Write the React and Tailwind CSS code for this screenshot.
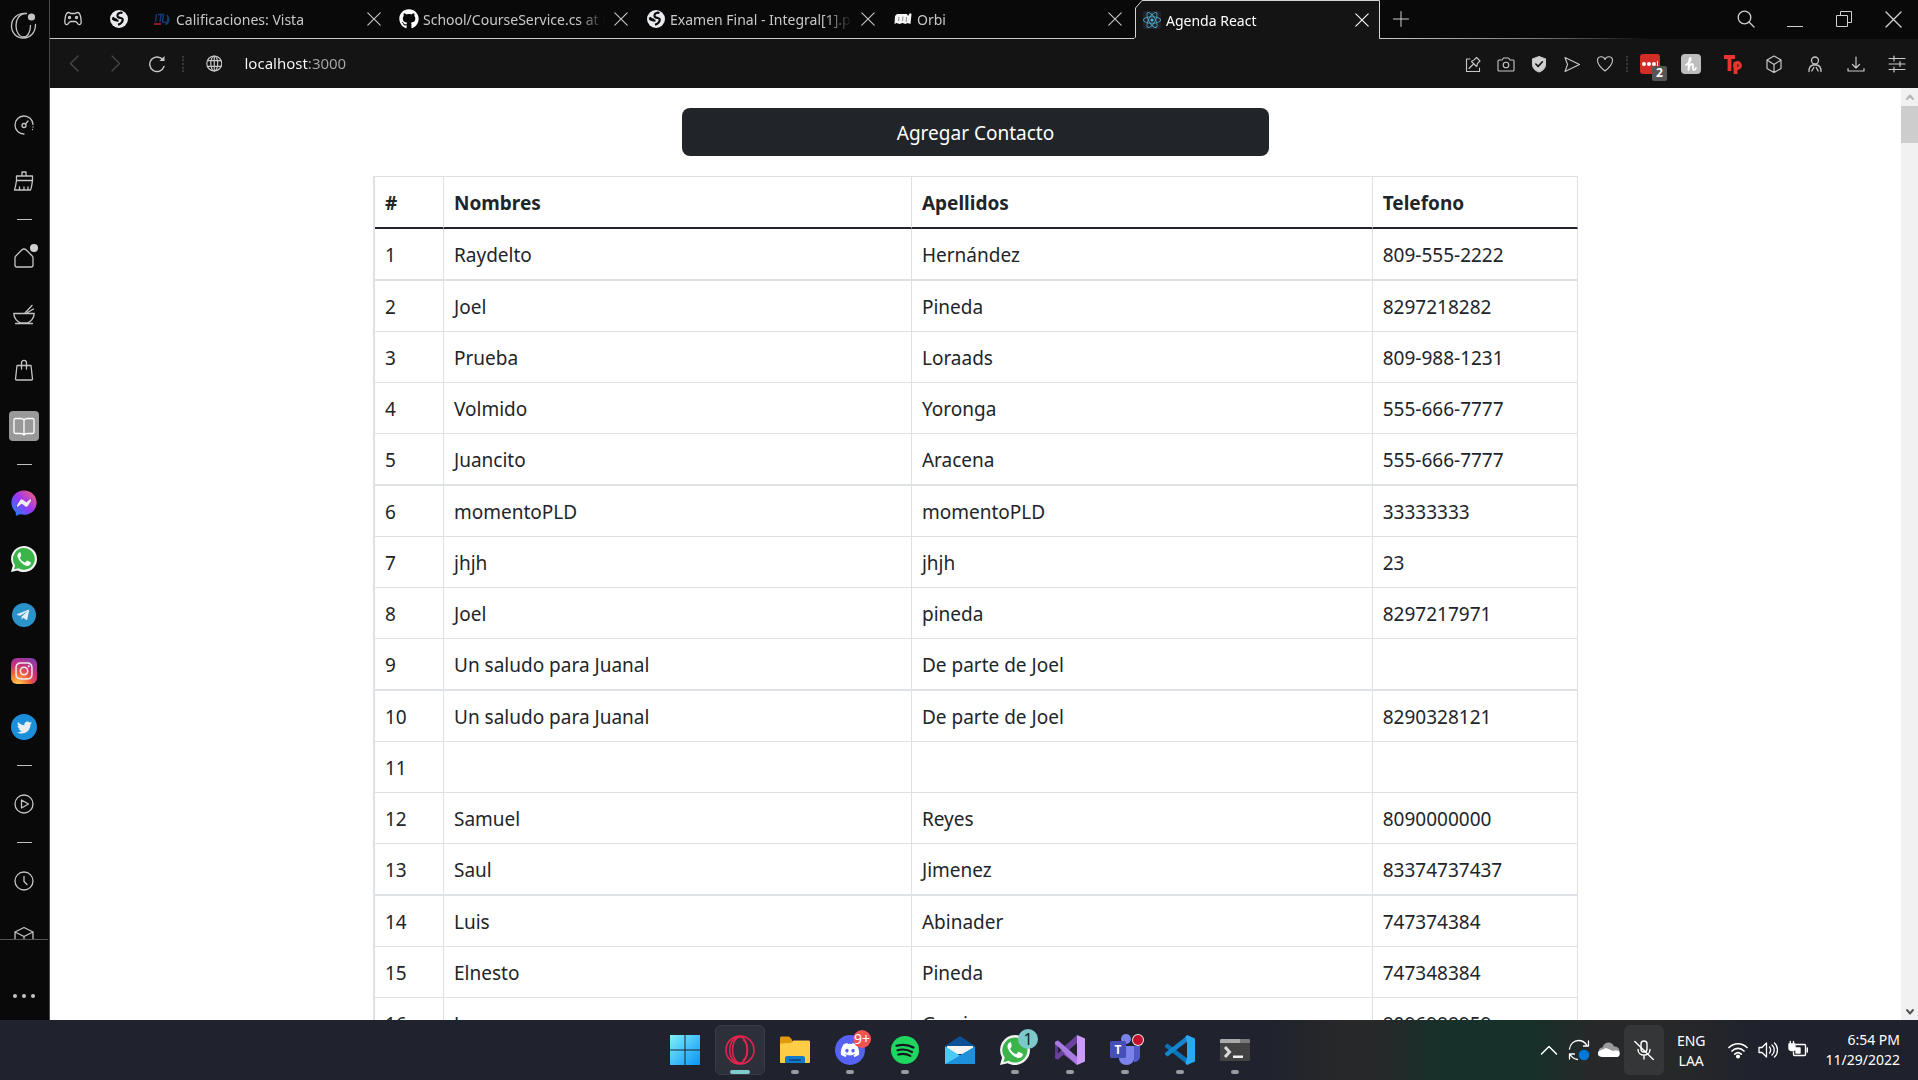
import { useId } from "react";
import {
  FaDiscord,
  FaFacebookMessenger,
  FaGithub,
  FaInstagram,
  FaReact,
  FaTelegramPlane,
  FaTwitter,
  FaWhatsapp,
} from "react-icons/fa";

const contacts = [
  ["Raydelto", "Hernández", "809-555-2222"],
  ["Joel", "Pineda", "8297218282"],
  ["Prueba", "Loraads", "809-988-1231"],
  ["Volmido", "Yoronga", "555-666-7777"],
  ["Juancito", "Aracena", "555-666-7777"],
  ["momentoPLD", "momentoPLD", "33333333"],
  ["jhjh", "jhjh", "23"],
  ["Joel", "pineda", "8297217971"],
  ["Un saludo para Juanal", "De parte de Joel", ""],
  ["Un saludo para Juanal", "De parte de Joel", "8290328121"],
  ["", "", ""],
  ["Samuel", "Reyes", "8090000000"],
  ["Saul", "Jimenez", "83374737437"],
  ["Luis", "Abinader", "747374384"],
  ["Elnesto", "Pineda", "747348384"],
  ["Jose", "Garcia", "8096988959"],
];

/* ---------- line icon helper ---------- */

function Line({ children, className = "size-6", box = 24, width = 1.3 }) {
  return (
    <svg
      viewBox={`0 0 ${box} ${box}`}
      className={className}
      fill="none"
      stroke="currentColor"
      strokeWidth={width}
      strokeLinecap="round"
      strokeLinejoin="round"
      aria-hidden="true"
    >
      {children}
    </svg>
  );
}

function CloseIcon({ className = "size-3.5" }) {
  return (
    <Line className={className} box={14} width={1.1}>
      <path d="M.8.8l12.4 12.4M13.2.8L.8 13.2" />
    </Line>
  );
}

function GlobeFilled() {
  return (
    <svg viewBox="0 0 18 18" className="size-[18px]" aria-hidden="true">
      <circle cx="9" cy="9" r="9" fill="#e8eaed" />
      <path
        d="M12.500 3C10.500 2.200 8 3 7.500 5c-.4 2 1 2.800 3.200 3 1.800.2 2.300 1.300 1.900 2.700-.6 2-2.300 3.200-4.600 4M7 9.800C4.800 9.500 3.500 8.700 2.500 7.300"
        stroke="#0a0a0a"
        strokeWidth="2.200"
        fill="none"
      />
      <path d="M2.500 8.500c1.500 1.800 3.500 2 6 2.200" stroke="#0a0a0a" strokeWidth="2" fill="none" />
    </svg>
  );
}

/* ---------- browser tabs ---------- */

const tabs = [
  {
    title: "Calificaciones: Vista",
    icon: (
      <svg viewBox="0 0 16 16" className="size-4" fill="none" aria-hidden="true">
        <path d="M2.500 3L1.500 11M4 3.500h6M7 3.500L6 11M9.500 3L8.500 11h3M11 13c3-1 3.500-6 2-9 2 2 3 7-1 9.500" stroke="#143a78" strokeWidth="1.500" />
        <path d="M0 12h7v2H0z" fill="#8d1c24" />
      </svg>
    ),
  },
  { title: "School/CourseService.cs at master", icon: <FaGithub className="size-5 text-white" /> },
  { title: "Examen Final - Integral[1].pdf", icon: <GlobeFilled /> },
  {
    title: "Orbi",
    icon: (
      <svg viewBox="0 0 18 14" className="w-[18px]" aria-hidden="true">
        <path d="M1 4l2-2h10l1 2 2-3 1.500 1-1 10-3-1-2 1-3-1-3 1-3-1-2 1z" fill="#f4f4f4" />
        <path d="M5 5l-.5 4M9 4.500L8.500 9M12.500 5l-.3 5" stroke="#777" strokeWidth=".8" />
      </svg>
    ),
  },
  {
    title: "Agenda React",
    active: true,
    icon: (
      <span className="flex size-[18px] items-center justify-center rounded-xs bg-[#20232a]">
        <FaReact className="size-[18px] text-[#4fb3d3]" />
      </span>
    ),
  },
];

function Tab({ title, icon, active }) {
  return (
    <div
      role="tab"
      aria-selected={!!active}
      className={
        active
          ? "relative flex w-[247px] min-w-0 items-center pl-2 pr-3 text-white"
          : "flex w-[247px] min-w-0 items-center border-b border-[#c8cacb] pl-1.5 pr-3 text-[#c8c8c8]"
      }
    >
      {active && (
        <svg viewBox="0 0 247 39" className="absolute inset-0 h-full w-full" aria-hidden="true">
          <path d="M0 38.500L1.500 37V8L8 .5H245.500V38.500V39H0z" fill="#141414" />
          <path d="M0 38.500L1.500 37V8L8 .5H245.500V38.500H247" fill="none" stroke="#d4d6d6" />
        </svg>
      )}
      <span className="relative flex w-5 shrink-0 justify-center">{icon}</span>
      <span className="relative ml-1 flex-1 overflow-hidden whitespace-nowrap pt-0.5 [mask-image:linear-gradient(90deg,#000_155px,transparent_182px)]">
        {title}
      </span>
      <button type="button" aria-label={`Cerrar ${title}`} className="relative shrink-0 pl-2">
        <CloseIcon />
      </button>
    </div>
  );
}

function TabStrip() {
  return (
    <div className="flex h-[39px] shrink-0 text-sm text-[#d0d0d0]">
      <div className="flex w-24 shrink-0 items-center gap-7 border-b border-[#c8cacb] pl-3.5">
        <button type="button" aria-label="GX Corner">
          <Line className="size-[18px]" box={18}>
            <path d="M4.500 2.500c1.500 0 1.500 1 2.500 1h4c1 0 1-1 2.500-1 2.500 0 3.500 5 3.700 9 .1 2.500-1.200 3.500-2.400 3-1.500-.6-2-3-3.500-3H6.700c-1.500 0-2 2.400-3.500 3-1.200.5-2.500-.5-2.400-3 .2-4 1.200-9 3.700-9z" />
            <circle cx="5.500" cy="7.500" r="1" />
            <circle cx="12.500" cy="7.500" r="1" />
          </Line>
        </button>
        <button type="button" aria-label="Pestaña fijada">
          <GlobeFilled />
        </button>
      </div>
      <div role="tablist" className="flex min-w-0">
        {tabs.map((tab) => (
          <Tab key={tab.title} {...tab} />
        ))}
      </div>
      <div className="flex flex-1 items-center border-b border-transparent pl-3 pr-4 [border-image:linear-gradient(90deg,#c8cacb_0%,#777_30%,transparent_50%)_1]">
        <button type="button" aria-label="Nueva pestaña">
          <Line className="size-4" box={16} width={1}>
            <path d="M8 .5v15M.5 8h15" />
          </Line>
        </button>
        <div className="ml-auto flex items-center gap-8">
          <button type="button" aria-label="Buscar pestañas">
            <Line className="size-[18px]" box={18}>
              <circle cx="7.500" cy="7.500" r="6.300" />
              <path d="M12 12l5 5" />
            </Line>
          </button>
          <button type="button" aria-label="Minimizar">
            <Line className="size-4" box={16} width={1.2}>
              <path d="M.5 15.500h15" />
            </Line>
          </button>
          <button type="button" aria-label="Restaurar">
            <svg viewBox="0 0 18 18" className="size-[18px]" fill="none" stroke="currentColor" aria-hidden="true">
              <path d="M1.500 5.500h11v11h-11zM5.500 5.500v-4h11v11h-4" />
            </svg>
          </button>
          <button type="button" aria-label="Cerrar">
            <CloseIcon className="size-[17px]" />
          </button>
        </div>
      </div>
    </div>
  );
}

/* ---------- address bar ---------- */

const pageActions = [
  ["Instantánea fijada", <path d="M6 4H2.500v12.500h13V13M5 13.500l4-4M7.500 6.500l5 5c1-1 1-2 .8-2.800L16 6l-3.500-3.500-2.700 2.700c-1 0-1.800.3-2.300 1.300z" />],
  [
    "Captura",
    <g>
      <path d="M2 5h3l1.500-2h5L13 5h3c.6 0 1 .4 1 1v9c0 .6-.4 1-1 1H2c-.6 0-1-.4-1-1V6c0-.6.4-1 1-1z" />
      <circle cx="9" cy="10" r="2.800" />
    </g>,
  ],
  [
    "Bloqueador",
    <g>
      <path d="M9 1.500L15.500 4v5.500c0 3.500-3 6-6.500 7.500-3.500-1.500-6.500-4-6.500-7.500V4z" fill="#d0d0d0" />
      <path d="M5.800 9l2.400 2.400 4.200-4.600" stroke="#141414" strokeWidth="1.600" />
    </g>,
  ],
  ["Enviar", <path d="M2 2.500L16.500 9.500 2 16.500l2.500-7z" />],
  ["Favorito", <path d="M9 16C4.500 12.500 1.500 9 1.500 5.500 1.500 1 7.500.5 9 4.500c1.500-4 7.500-3.500 7.500 1C16.500 9 13.500 12.500 9 16z" />],
];

function Dots() {
  return <span className="h-4 w-0 border-l-2 border-dotted border-[#3a3a3a]" />;
}

function AddressBar() {
  return (
    <div className="flex h-[49px] shrink-0 items-center bg-[#141414] pl-4 pr-3 text-[#c8c8c8]">
      <div className="flex items-center gap-6">
        <button type="button" aria-label="Atrás" className="text-[#4a4a4a]">
          <Line className="size-[17px]" box={17} width={1.2}>
            <path d="M12 1L4.500 8.500 12 16" />
          </Line>
        </button>
        <button type="button" aria-label="Adelante" className="text-[#4a4a4a]">
          <Line className="size-[17px]" box={17} width={1.2}>
            <path d="M5 1l7.500 7.500L5 16" />
          </Line>
        </button>
        <button type="button" aria-label="Recargar">
          <Line className="size-[18px]" box={18} width={1.4}>
            <path d="M16 11.500A7.300 7.300 0 1 1 15 5" />
            <path d="M16.500 1v5h-5z" fill="currentColor" stroke="none" />
          </Line>
        </button>
      </div>
      <span className="ml-4 flex">
        <Dots />
      </span>
      <form className="ml-[22px] flex flex-1 items-center gap-[22px]" onSubmit={(e) => e.preventDefault()}>
        <Line className="size-[17px]" box={17} width={1.2}>
          <circle cx="8.500" cy="8.500" r="7.700" />
          <ellipse cx="8.500" cy="8.500" rx="3.600" ry="7.700" />
          <path d="M1.500 5.500h14M1.500 11.500h14M8.500 1v15" />
        </Line>
        <input
          aria-label="Dirección"
          defaultValue="localhost:3000"
          className="w-full bg-[linear-gradient(90deg,#fff_65px,#a8a8a8_65px)] bg-clip-text text-[15px] text-transparent outline-none"
        />
      </form>
      <div className="flex items-center gap-[15px]">
        {pageActions.map(([label, shape]) => (
          <button type="button" key={label} aria-label={label}>
            <Line className="size-[18px]" box={18} width={1.1}>
              {shape}
            </Line>
          </button>
        ))}
      </div>
      <span className="ml-3 flex">
        <Dots />
      </span>
      <div className="ml-3 flex items-center gap-[23px]">
        <button type="button" aria-label="LastPass" className="relative mr-[-2px] flex h-[20px] w-[20px] items-center justify-center gap-[1px] rounded-[3px] bg-[#d32d27]">
          <span className="size-[4px] rounded-full bg-white" />
          <span className="size-[4px] rounded-full bg-white" />
          <span className="size-[4px] rounded-full bg-white" />
          <span className="h-[6px] w-px bg-white" />
          <span className="absolute left-3 top-3 flex h-[15px] w-[15px] items-center justify-center rounded-xs bg-[#555] text-xs font-bold text-white">
            2
          </span>
        </button>
        <button type="button" aria-label="Honey" className="flex size-5 items-center justify-center rounded-sm bg-[#bdbdbd] text-white">
          <Line className="size-4" box={16} width={1.8}>
            <path d="M3 9c3-2 5-5 4.500-7C6.500 1.500 6 5 5.500 14c.5-4 2-6 3.500-6 2 0 0 5 1.500 6 .8.300 2-.7 2.500-2" />
          </Line>
        </button>
        <button type="button" aria-label="Teleparty" className="text-[#e8352f]">
          <svg viewBox="0 0 18 20" className="h-5 w-[18px]" fill="none" stroke="currentColor" strokeWidth="3.800" aria-hidden="true">
            <path d="M0 3h11M5.500 3v14M11.500 8v12" />
            <circle cx="13.500" cy="11.500" r="2.800" strokeWidth="3.200" />
          </svg>
        </button>
        <button type="button" aria-label="Extensiones">
          <Line className="size-[18px]" box={18} width={1.2}>
            <path d="M9 1l7 4v8.500L9 17.500 2 13.500V5zM2 5l7 4.500L16 5M9 9.500v8" />
          </Line>
        </button>
        <button type="button" aria-label="Perfil">
          <Line className="size-[18px]" box={18} width={1.3}>
            <circle cx="9" cy="5.500" r="3.500" />
            <path d="M3 16.500c0-4 1.500-6 4-6.500h4c2.500.5 4 2.500 4 6.500M5.800 16l2-3.500M12.200 16l-2-3.500" />
          </Line>
        </button>
        <button type="button" aria-label="Descargas">
          <Line className="size-[18px]" box={18} width={1.2}>
            <path d="M9 2v11M5.500 9.500L9 13l3.500-3.500M1 13.500v2.500h16v-2.500" />
          </Line>
        </button>
        <button type="button" aria-label="Configuración rápida">
          <Line className="size-[18px]" box={18} width={1.2}>
            <path d="M1 3.500h16M1 9h16M1 14.500h16M6 1v5M12 6.500v5M6 12v5" />
          </Line>
        </button>
      </div>
    </div>
  );
}

/* ---------- sidebar ---------- */

function Separator() {
  return (
    <div className="flex h-[47px] shrink-0 items-center">
      <span className="h-px w-[15px] bg-[#c0c0c0]" />
    </div>
  );
}

function SideButton({ label, children, className = "" }) {
  return (
    <button type="button" aria-label={label} className={`relative flex size-[30px] shrink-0 items-center justify-center ${className}`}>
      {children}
    </button>
  );
}

function Sidebar() {
  const gradient = useId();
  return (
    <aside className="flex w-[50px] shrink-0 flex-col border-r border-[#4a4a4a] bg-[#090909] pr-px text-[#c4c4c4]">
      <div className="flex h-[110px] shrink-0 justify-center pt-3">
        <button type="button" aria-label="Menú" className="size-7">
          <Line className="size-7" box={28} width={1.3}>
            <path d="M16.500 1.500C7 .5 1.500 7 1.500 14c0 6.500 5 12 11.500 12 7.500 0 12.500-5.500 12.500-13.500" />
            <path d="M15.500 1.500C9 2 6 7.500 6 13.500 6 19.500 9 25 13.500 25c4 0 7-4.500 7-11.500" />
            <circle cx="21.500" cy="5" r="3.600" fill="currentColor" stroke="none" />
          </Line>
        </button>
      </div>
      <div className="flex min-h-0 flex-1 flex-col items-center overflow-hidden border-b border-[#555]">
        <div className="flex flex-col items-center gap-[26px]">
          <SideButton label="GX Control">
            <Line className="size-5" box={20}>
              <path d="M10 19A9 9 0 1 1 19 9.500" />
              <circle cx="10" cy="10.500" r="2" />
              <path d="M11.500 9L14 6" />
              <path d="M19 12v0M18.500 14.500v0" />
            </Line>
          </SideButton>
          <SideButton label="GX Cleaner">
            <Line className="size-[22px]" box={22}>
              <path d="M9 6V2h4v4M3.500 6h16v4.500h-16zM3.500 10.500C3 14 2.500 17 1.500 20h16c1-2 1.500-6 2-9.500M6.500 20v-3M11 20v-3M15 20v-3" />
            </Line>
          </SideButton>
        </div>
        <Separator />
        <div className="flex flex-col items-center gap-[26px]">
          <SideButton label="Inicio">
            <Line className="size-[22px]" box={22}>
              <path d="M8.500 3.200L2.800 9c-.5.500-.8 1-.8 1.700V18c0 1.100.9 2 2 2h14c1.100 0 2-.9 2-2v-7.300c0-.7-.3-1.200-.8-1.700l-5.700-5.800c-1.500-1.500-3.500-1.500-5 0z" />
            </Line>
            <span className="absolute right-px top-px size-2 rounded-full bg-[#d0d0d0]" />
          </SideButton>
          <SideButton label="Cocina">
            <Line className="size-[22px]" box={22}>
              <path d="M.8 10.500h20.400c0 4.500-3.700 8.500-7 9.500H7.800c-3.300-1-7-5-7-9.500zM2.500 20.500h17M12 10l7-7.500M14.500 9.500l6-3.500" />
            </Line>
          </SideButton>
          <SideButton label="Compras">
            <Line className="size-[22px]" box={22}>
              <path d="M4 6.500h14l1.500 13.500c0 .6-.4 1-1 1h-15c-.6 0-1-.4-1-1zM8.500 10V4c0-3.500 5-3.500 5 0v6" />
            </Line>
          </SideButton>
          <SideButton label="Lectura" className="rounded-sm bg-[#999] text-white">
            <Line className="size-[22px]" box={22}>
              <path d="M11 5C10 3.500 9 3.500 7.500 3.500h-5c-.8 0-1.500.7-1.500 1.500v12c0 .8.700 1.500 1.500 1.500h5c1.500 0 2.500.3 3.500 1.500 1-1.200 2-1.500 3.500-1.500h5c.8 0 1.500-.7 1.500-1.500V5c0-.8-.7-1.500-1.500-1.500h-5C13 3.500 12 3.500 11 5zM11 5v15" />
            </Line>
          </SideButton>
        </div>
        <Separator />
        <div className="flex flex-col items-center gap-[26px]">
          <SideButton label="Messenger">
            <svg width="0" height="0" className="absolute" aria-hidden="true">
              <linearGradient id={gradient} x1="0" y1="1" x2="1" y2="0">
                <stop offset="0" stopColor="#0a8cff" />
                <stop offset=".5" stopColor="#9a36f5" />
                <stop offset="1" stopColor="#ff6468" />
              </linearGradient>
            </svg>
            <span className="absolute size-4 rounded-full bg-[#eee]" />
            <FaFacebookMessenger className="relative size-[26px]" style={{ fill: `url(#${gradient})` }} />
          </SideButton>
          <SideButton label="WhatsApp">
            <WhatsAppMark className="size-[26px]" />
          </SideButton>
          <SideButton label="Telegram">
            <span className="flex size-6 items-center justify-center rounded-full bg-[#2a93c9]">
              <FaTelegramPlane className="mr-0.5 size-3.5 text-[#e6eef4]" />
            </span>
          </SideButton>
          <SideButton label="Instagram">
            <span className="flex size-[26px] items-center justify-center rounded-md bg-[radial-gradient(circle_at_25%_105%,#fdc04f_8%,#f0603c_38%,#cc2c7c_62%,#6a45c0_100%)]">
              <FaInstagram className="size-5 text-[#f1e6ee]" />
            </span>
          </SideButton>
          <SideButton label="Twitter">
            <span className="flex size-[26px] items-center justify-center rounded-full bg-[#1c8fdc]">
              <FaTwitter className="size-[15px] text-[#e8eef2]" />
            </span>
          </SideButton>
        </div>
        <Separator />
        <SideButton label="Reproductor">
          <Line className="size-5" box={20}>
            <circle cx="10" cy="10" r="9" />
            <path d="M7.500 6l7 4-7 4z" />
          </Line>
        </SideButton>
        <Separator />
        <div className="flex flex-col items-center gap-[26px]">
          <SideButton label="Historial">
            <Line className="size-5" box={20}>
              <circle cx="10" cy="10" r="9" />
              <path d="M10 5.500v5l3 3" />
            </Line>
          </SideButton>
          <SideButton label="Extensiones">
            <Line className="size-[22px]" box={22}>
              <path d="M11 1.500L20 6v10.500L11 21l-9-4.500V6zM2 6l9 4.500L20 6M11 10.500V21" />
            </Line>
          </SideButton>
        </div>
      </div>
      <div className="flex h-20 shrink-0 items-center justify-center">
        <button type="button" aria-label="Configuración" className="mt-8 flex gap-[5px]">
          <span className="size-1 rounded-full bg-[#c4c4c4]" />
          <span className="size-1 rounded-full bg-[#c4c4c4]" />
          <span className="size-1 rounded-full bg-[#c4c4c4]" />
        </button>
      </div>
    </aside>
  );
}

function WhatsAppMark({ className }) {
  return (
    <span className={`relative flex items-center justify-center ${className}`}>
      <svg viewBox="0 0 32 32" className="absolute inset-0 size-full" aria-hidden="true">
        <path d="M16 0a16 16 0 0 1 0 32c-3 0-5.500-.8-7.800-2L0 32l2.200-8A16 16 0 0 1 16 0z" fill="#f4f4f4" />
        <path d="M16 2.600a13.400 13.400 0 1 1-7 24.900L3.700 29l1.400-5.100A13.400 13.400 0 0 1 16 2.600z" fill="#3bb54a" />
        <path
          d="M11 7.800c-.5 0-1 .2-1.500.8-1.500 1.700-2 3.600-1 6 2 4.600 5.500 8.100 10 9.700 2.500.8 5-.5 5.700-2.500.3-1 .3-1.600 0-1.900l-3.700-1.900c-.6-.2-.9-.1-1.300.4l-1.300 1.700c-.3.300-.6.400-1.100.2-3-1.300-4.500-3-5.800-5.200-.2-.4-.1-.8.200-1.100l1.100-1.400c.2-.4.2-.7.100-1.100L11.800 8.300c-.2-.4-.4-.5-.8-.5z"
          fill="#fff"
        />
      </svg>
    </span>
  );
}

/* ---------- page ---------- */

function ContactsPage() {
  return (
    <div className="flex min-h-0 flex-1 bg-white">
      <main className="min-w-0 flex-1 overflow-hidden text-[19px] text-[#212529]">
        <div className="mx-auto flex w-[65.1%] flex-col items-center gap-5 pt-5">
          <button type="button" className="h-12 w-[calc(50%-15px)] rounded-lg bg-[#212529] pt-0.5 text-white">
            Agregar Contacto
          </button>
          <table className="w-full table-fixed border-separate border-spacing-0 border-l-2 border-t border-[#dee2e6] text-left leading-7">
            <colgroup>
              <col className="w-[69px]" />
              <col className="w-[38.9%]" />
              <col className="w-[38.3%]" />
              <col />
            </colgroup>
            <thead>
              <tr>
                {["#", "Nombres", "Apellidos", "Telefono"].map((name) => (
                  <th key={name} scope="col" className="h-[52px] border-b-2 border-r border-b-[#212529] border-r-[#dee2e6] px-2.5 pt-0.5 font-bold">
                    {name}
                  </th>
                ))}
              </tr>
            </thead>
            <tbody className="[&>tr:nth-child(4n+1)>td]:h-[52px] [&>tr:nth-child(4n+1)>td]:border-b-2">
              {contacts.map((row, i) => (
                <tr key={i}>
                  {[i + 1, ...row].map((value, j) => (
                    <td key={j} className="h-[51px] border-b border-r border-[#dee2e6] px-2.5 pt-0.5">
                      {value}
                    </td>
                  ))}
                </tr>
              ))}
            </tbody>
          </table>
        </div>
      </main>
      <div className="flex w-[17px] shrink-0 flex-col items-center bg-[#f1f1f1]" aria-hidden="true">
        <span className="flex h-[18px] items-center text-[#b5b5b5]">
          <Line className="size-2.5" box={10} width={2}>
            <path d="M2 7l3-3.500L8 7" />
          </Line>
        </span>
        <span className="h-[37px] w-full bg-[#cdcdcd]" />
        <span className="mt-auto flex h-[17px] items-center text-[#555]">
          <Line className="size-2.5" box={10} width={2}>
            <path d="M2 3l3 3.500L8 3" />
          </Line>
        </span>
      </div>
    </div>
  );
}

/* ---------- taskbar ---------- */

function WindowsMark() {
  const g = useId();
  return (
    <svg viewBox="0 0 30 36" className="h-9 w-[30px]" aria-hidden="true">
      <linearGradient id={g} x1="0" y1="0" x2="1" y2="1">
        <stop offset="0" stopColor="#7ff0fb" />
        <stop offset="1" stopColor="#0a93f5" />
      </linearGradient>
      <path d="M0 3h14.500v14.500H0zM15.500 3H30v14.500H15.500zM0 18.500h14.500V33H0zM15.500 18.500H30V33H15.500z" fill={`url(#${g})`} />
    </svg>
  );
}

function OperaMark() {
  return (
    <svg viewBox="0 0 30 30" className="size-[30px]" fill="none" stroke="#ea2350" strokeWidth="1.500" aria-hidden="true">
      <circle cx="15" cy="15" r="14" />
      <ellipse cx="15" cy="15" rx="7.500" ry="13" />
      <path d="M18 4.500C23.500 8 23.500 22 18 25.500" />
      <path d="M13 1.500C2 6 2 24 13 28.500" />
    </svg>
  );
}

function ExplorerMark() {
  return (
    <svg viewBox="0 0 30 28" className="w-[30px]" aria-hidden="true">
      <path d="M0 2C0 1 1 .5 1.500.5H9L12 3.500V9H0z" fill="#e09a0c" />
      <path d="M0 7.500L11 7l2-2.500h15.500c1 0 1.500.5 1.500 1.500v20c0 .6-.5 1-1.500 1h-27C.5 27 0 26.600 0 26z" fill="#ffcc45" />
      <path d="M5 27v-5c0-1 .8-2 2-2h16c1.200 0 2 1 2 2v5z" fill="#1479c9" />
      <path d="M9 23h12v2H9z" fill="#0b4f8c" />
    </svg>
  );
}

function DiscordMark() {
  return (
    <span className="flex size-[30px] items-center justify-center rounded-full bg-[#5562f2]">
      <FaDiscord className="size-5 text-white" />
    </span>
  );
}

function SpotifyMark() {
  return (
    <svg viewBox="0 0 28 28" className="size-7" aria-hidden="true">
      <circle cx="14" cy="14" r="14" fill="#1fd661" />
      <path d="M5.500 9.800c6-1.700 12-1.200 17 1.700M6.500 14.300c5-1.400 10-.9 14.500 1.700M7.300 18.500c4.500-1 8.500-.6 12 1.400" stroke="#14181c" strokeWidth="2.200" strokeLinecap="round" fill="none" />
    </svg>
  );
}

function MailMark() {
  return (
    <svg viewBox="0 0 30 30" className="size-[30px]" aria-hidden="true">
      <path d="M0 11L15 1l15 10v3H0z" fill="#0a4f93" />
      <path d="M2 11h26v8H2z" fill="#f3f3f3" />
      <path d="M0 11.500L15 21 30 11.500V29H0z" fill="#36b8ef" />
      <path d="M0 29L30 11.500V29z" fill="#1e91dd" />
      <path d="M0 29L15 20.500 0 11.500z" fill="#4cc9f5" />
    </svg>
  );
}

function VisualStudioMark() {
  return (
    <svg viewBox="0 0 30 30" className="size-[30px]" aria-hidden="true">
      <path d="M0 7l3-1.500L22 22v8L3 15v9.500L0 23z" fill="#8a5bc4" />
      <path d="M0 7v16l3 1.500L9 19l-1-8-5-5.500z" fill="#5b3a8c" />
      <path d="M3 24.500L22 8V0L0 20v3z" fill="#68429d" />
      <path d="M3 5.500L22 22v8L0 9V7z" fill="#a97be0" />
      <path d="M22 0l8 3.500v23L22 30z" fill="#cf9bfb" />
      <path d="M3 11.500v7L6.500 15z" fill="#20232d" />
    </svg>
  );
}

function TeamsMark() {
  return (
    <svg viewBox="0 0 30 32" className="w-[30px] overflow-visible" aria-hidden="true">
      <circle cx="16" cy="5" r="5" fill="#7b83eb" />
      <path d="M21 12h9v10c0 4-3 6-6 6z" fill="#5059c9" />
      <path d="M9 12h15v12c0 4-3 7-7.500 7S9 28 9 24z" fill="#7b83eb" />
      <rect y="7" width="16" height="17" rx="1.500" fill="#464eb8" />
      <text x="8" y="20" fontSize="12" fontWeight="bold" fill="#fff" textAnchor="middle">T</text>
      <circle cx="28" cy="6" r="6" fill="#e8e8e8" />
      <circle cx="28" cy="6" r="5" fill="#c4102e" />
    </svg>
  );
}

function CodeMark() {
  return (
    <svg viewBox="0 0 30 30" className="size-[30px]" aria-hidden="true">
      <path d="M0 10.500L2.500 8.500 23 24v6L0 12z" fill="#0a73b8" />
      <path d="M0 19.500l2.500 2L23 6V0L0 18z" fill="#1287cf" />
      <path d="M22 0l8 3.500v23L22 30l-1.500-1.500L22 22V8l-1.500-6.500z" fill="#2aa9f2" />
    </svg>
  );
}

function TerminalMark() {
  return (
    <svg viewBox="0 0 30 28" className="w-[30px]" aria-hidden="true">
      <rect y="3" width="30" height="22" rx="1.500" fill="#434343" />
      <path d="M0 7V4.500C0 3.500.5 3 1.500 3H20v4z" fill="#ababab" />
      <path d="M20 3h8.500c1 0 1.500.5 1.500 1.500V7H20z" fill="#7a7a7a" />
      <path d="M5 11l4.500 5L5 21" stroke="#d8d8d8" strokeWidth="3" fill="none" />
      <path d="M13 19.500h10v2.500H13z" fill="#f0f0f0" />
    </svg>
  );
}

const apps = [
  { name: "Inicio", mark: <WindowsMark />, idle: true },
  { name: "Opera GX", mark: <OperaMark />, active: true },
  { name: "Explorador", mark: <ExplorerMark /> },
  {
    name: "Discord",
    mark: <DiscordMark />,
    badge: (
      <span className="absolute right-1 top-[5px] flex size-[18px] items-center justify-center rounded-full bg-[#ee5452] text-sm text-white">9+</span>
    ),
  },
  { name: "Spotify", mark: <SpotifyMark /> },
  { name: "Correo", mark: <MailMark />, idle: true },
  {
    name: "WhatsApp",
    mark: <WhatsAppMark className="size-[30px]" />,
    badge: (
      <span className="absolute right-0.5 top-1 flex size-5 items-center justify-center rounded-full bg-[#7dc8cb] text-base text-[#12282b]">1</span>
    ),
  },
  { name: "Visual Studio", mark: <VisualStudioMark /> },
  { name: "Teams", mark: <TeamsMark /> },
  { name: "Visual Studio Code", mark: <CodeMark /> },
  { name: "Terminal", mark: <TerminalMark /> },
];

function Taskbar() {
  return (
    <footer className="grid h-[60px] shrink-0 grid-cols-[1fr_auto_1fr] items-center bg-[linear-gradient(90deg,#20232d_0%,#20232d_66%,#272829_70%,#272829_72%,#17302a_75%,#17302a_80%,#272829_83%,#272829_87%,#1f222c_92%)] text-sm text-white">
      <nav aria-label="Aplicaciones" className="col-start-2 flex gap-[5px] pl-0.5">
        {apps.map((app) => (
          <button
            type="button"
            key={app.name}
            aria-label={app.name}
            className={
              app.active
                ? "relative flex size-[50px] items-center justify-center rounded-md border border-[#3a3c45] bg-[#2e3039]"
                : "relative flex size-[50px] items-center justify-center"
            }
          >
            {app.mark}
            {app.badge}
            {app.active && <span className="absolute bottom-0 h-1 w-5 rounded-full bg-[#7fcbd0]" />}
            {!app.active && !app.idle && <span className="absolute bottom-px h-1 w-2 rounded-full bg-[#9a9b9e]" />}
          </button>
        ))}
      </nav>
      <div className="flex items-center justify-end pr-[18px]">
        <button type="button" aria-label="Iconos ocultos">
          <Line className="size-[18px]" box={18} width={1.5}>
            <path d="M1.500 13L9 5.500l7.500 7.500" />
          </Line>
        </button>
        <button type="button" aria-label="Actualización" className="ml-2.5">
          <Line className="size-[22px]" box={22} width={1.3}>
            <path d="M1.500 10C2 5 6 1.500 10.500 1.500c3.500 0 6.500 1.500 8.500 5M20.500 2v5h-5M1.500 20v-5h5M2.500 16c1.500 2.500 4 4 7 4.500" />
            <circle cx="16" cy="16" r="5.300" fill="#0078d7" stroke="none" />
          </Line>
        </button>
        <button type="button" aria-label="OneDrive" className="ml-2">
          <svg viewBox="0 0 22 16" className="w-[22px]" aria-hidden="true">
            <path d="M5 13C-1 12 0 5.500 4.500 5.500 6-.5 14-1.500 16 4.500c4 0 6 2.500 5.500 6z" fill="#9a9a9a" />
            <path d="M4.500 15C-1.500 15-1 9 2 8.500L8 6l7 3c6-1.500 7.500 1 6.500 4-.5 1.500-1.500 2-3 2z" fill="#fff" />
          </svg>
        </button>
        <button type="button" aria-label="Micrófono" className="ml-1 flex h-[50px] w-10 items-center justify-center rounded-md bg-[#353638]">
          <Line className="size-5" box={20} width={1.4}>
            <rect x="7" y="1" width="6" height="11" rx="3" />
            <path d="M4 9.500c0 7.500 12 7.500 12 0M10 15v4M.8 1.500l18.500 18" />
          </Line>
        </button>
        <button type="button" aria-label="Idioma" className="ml-[13px] pt-0.5 text-center leading-5">
          ENG
          <br />
          LAA
        </button>
        <button type="button" aria-label="Red, sonido y batería" className="ml-[22px] flex items-center gap-2.5">
          <Line className="size-5" box={20} width={1.7}>
            <path d="M1 7.500c5-5 13-5 18 0M4 11c3.500-3.500 8.500-3.500 12 0M6.800 14.200c2-2 4.400-2 6.400 0" />
            <circle cx="10" cy="16.500" r="1.200" fill="currentColor" />
          </Line>
          <Line className="size-5" box={20} width={1.3}>
            <path d="M1 7.500h3l4.500-4.500v14L4 12.500H1zM11.500 7c1.500 1.500 1.500 4.500 0 6M14 5c3 2.500 3 7.500 0 10M16.500 3c4 3.500 4 10.500 0 14" />
          </Line>
          <Line className="size-5" box={20} width={1.4}>
            <path d="M8 4.500h8.500c.6 0 1 .4 1 1v9c0 .6-.4 1-1 1h-10c-.6 0-1-.4-1-1V12M19.300 8v4" />
            <path d="M1 4h6v4.500c0 1-1 2-2 2H3c-1 0-2-1-2-2zM2.300 1.500V4M5.500 1.500V4M8 8h4v5H8z" fill="currentColor" />
          </Line>
        </button>
        <button type="button" aria-label="Fecha y hora" className="ml-[18px] text-right leading-5">
          6:54 PM
          <br />
          11/29/2022
        </button>
      </div>
    </footer>
  );
}

export default function App() {
  return (
    <div className="flex h-screen flex-col overflow-hidden bg-[#090909] font-['Noto_Sans','Open_Sans',sans-serif]">
      <div className="flex min-h-0 flex-1">
        <Sidebar />
        <div className="flex min-w-0 flex-1 flex-col">
          <TabStrip />
          <AddressBar />
          <ContactsPage />
        </div>
      </div>
      <Taskbar />
    </div>
  );
}
